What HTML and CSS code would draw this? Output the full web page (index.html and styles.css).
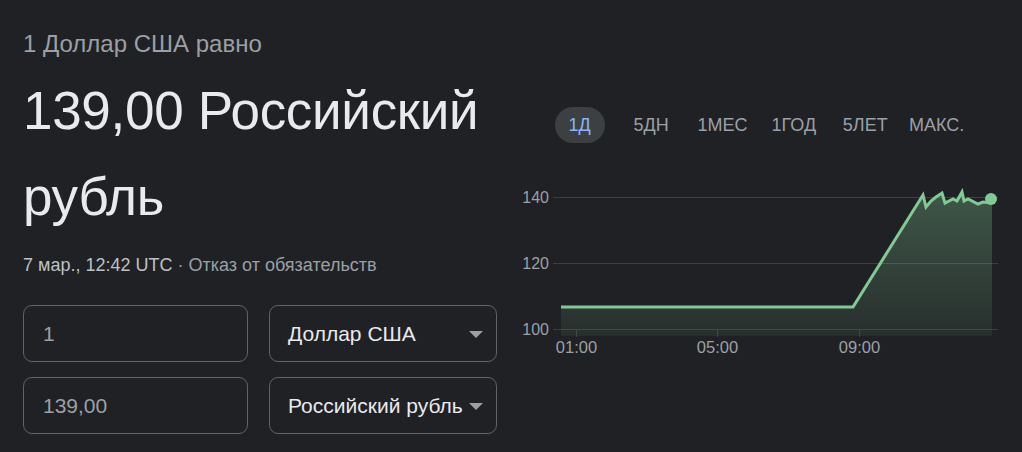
FILE: index.html
```html
<!DOCTYPE html>
<html lang="ru">
<head>
<meta charset="utf-8">
<title>Конвертер валют</title>
<link rel="stylesheet" href="styles.css">
</head>
<body>
<main class="page">
  <section class="left">
    <div class="subtitle">1 Доллар США равно</div>
    <div class="result">139,00 Российский рубль</div>
    <div class="meta"><span class="time">7 мар., 12:42 UTC</span> · <span class="disclaimer">Отказ от обязательств</span></div>
    <div class="converter">
      <div class="field input"><span>1</span></div>
      <div class="field select"><span>Доллар США</span><i class="caret"></i></div>
      <div class="field input"><span>139,00</span></div>
      <div class="field select"><span>Российский рубль</span><i class="caret"></i></div>
    </div>
  </section>
  <section class="right">
    <nav class="tabs">
      <div class="tab active"><span>1Д</span></div>
      <div class="tab"><span>5ДН</span></div>
      <div class="tab"><span>1МЕС</span></div>
      <div class="tab"><span>1ГОД</span></div>
      <div class="tab"><span>5ЛЕТ</span></div>
      <div class="tab"><span>МАКС.</span></div>
    </nav>
    <svg class="chart" width="500" height="185" viewBox="0 0 500 185">
      <defs>
        <linearGradient id="fillg" x1="0" y1="0" x2="0" y2="1">
          <stop offset="0" stop-color="#81c995" stop-opacity="0.32"/>
          <stop offset="1" stop-color="#81c995" stop-opacity="0.08"/>
        </linearGradient>
      </defs>
      <g class="grid">
        <line x1="43" y1="17.5" x2="488" y2="17.5"/>
        <line x1="43" y1="83.5" x2="488" y2="83.5"/>
        <line x1="43" y1="149.5" x2="488" y2="149.5"/>
        <line x1="66.5" y1="149" x2="66.5" y2="157"/>
        <line x1="207.5" y1="149" x2="207.5" y2="157"/>
        <line x1="349.5" y1="149" x2="349.5" y2="157"/>
      </g>
      <path class="area" d="M51 127 L343 127 L413 15 L416 27 L421 21 L426 17 L432 13 L435 23 L443 19 L447 21 L452 12 L454 21 L458 19 L468 24 L473 22 L480 23 L482 20 L482 156 L51 156 Z"/>
      <path class="line" d="M51 127 L343 127 L413 15 L416 27 L421 21 L426 17 L432 13 L435 23 L443 19 L447 21 L452 12 L454 21 L458 19 L468 24 L473 22 L480 23 L482 20"/>
      <circle class="dot" cx="481" cy="19" r="6"/>
      <g class="ylab">
        <text x="39" y="23">140</text>
        <text x="39" y="89">120</text>
        <text x="39" y="155">100</text>
      </g>
      <g class="xlab">
        <text x="66.5" y="173">01:00</text>
        <text x="207.5" y="173">05:00</text>
        <text x="349.5" y="173">09:00</text>
      </g>
    </svg>
  </section>
</main>
</body>
</html>
```
FILE: styles.css
```css
html, body {
  margin: 0;
  padding: 0;
  background: #202124;
}

body {
  font-family: "Liberation Sans", Arial, sans-serif;
  color: #e8eaed;
  width: 1022px;
  height: 452px;
  overflow: hidden;
}

.page {
  display: flex;
}

.left {
  width: 474px;
  padding: 30px 0 0 23px;
}

.subtitle {
  font-size: 24px;
  color: #9aa0a6;
}

.result {
  margin-top: 10px;
  font-size: 53px;
  letter-spacing: -0.3px;
  line-height: 86px;
  color: #e8eaed;
  width: 474px;
}

.meta {
  margin-top: 15px;
  font-size: 18px;
  color: #9aa0a6;
}

.meta .time {
  color: #bdc1c6;
}

.converter {
  margin-top: 29px;
  display: grid;
  grid-template-columns: 225px 228px;
  column-gap: 21px;
  row-gap: 15px;
}

.field {
  box-sizing: border-box;
  height: 57px;
  border: 1px solid #5f6368;
  border-radius: 9px;
  display: flex;
  align-items: center;
  font-size: 21px;
}

.input {
  padding-left: 19px;
  color: #9aa0a6;
}

.select {
  padding: 0 13px 0 18px;
  color: #e8eaed;
  justify-content: space-between;
}

.caret {
  width: 0;
  height: 0;
  border-left: 7px solid transparent;
  border-right: 7px solid transparent;
  border-top: 7px solid #9aa0a6;
  margin-top: 1px;
}

.right {
  width: 500px;
  padding-left: 13px;
}

.tabs {
  margin-top: 107px;
  margin-left: 34px;
  display: grid;
  grid-template-columns: repeat(6, 71.4px);
  height: 36px;
}

.tab {
  display: flex;
  align-items: center;
  justify-content: center;
  font-size: 18px;
  color: #9aa0a6;
}

.tab.active span {
  display: flex;
  align-items: center;
  justify-content: center;
  width: 50px;
  height: 36px;
  border-radius: 18px;
  background: #3c4043;
  color: #8ab4f8;
}

.chart {
  display: block;
  margin-top: 37px;
}

.grid line {
  stroke: #3c4043;
  stroke-width: 1;
}

.area {
  fill: url(#fillg);
}

.line {
  fill: none;
  stroke: #81c995;
  stroke-width: 3;
  stroke-linejoin: miter;
}

.dot {
  fill: #81c995;
}

.ylab text {
  font-family: "Liberation Sans", Arial, sans-serif;
  font-size: 16px;
  fill: #9aa0a6;
  text-anchor: end;
}

.xlab text {
  font-family: "Liberation Sans", Arial, sans-serif;
  font-size: 16.5px;
  fill: #9aa0a6;
  text-anchor: middle;
}
```
